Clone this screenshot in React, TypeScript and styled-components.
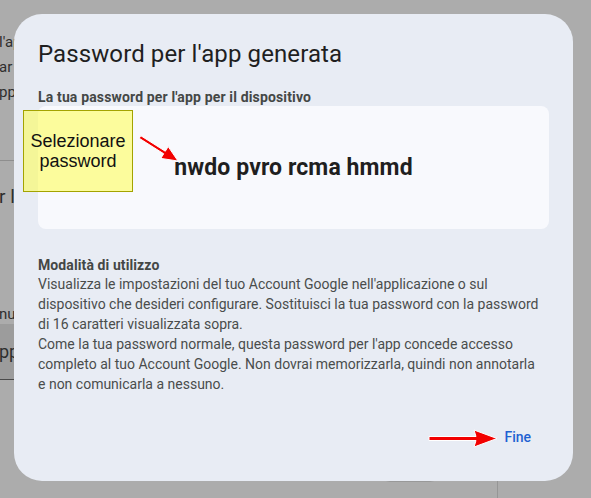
import React from "react";
import styled, { createGlobalStyle } from "styled-components";

const GlobalStyle = createGlobalStyle`
  html, body { margin: 0; padding: 0; }
  body {
    width: 591px;
    height: 498px;
    overflow: hidden;
    background: #acacac;
    font-family: Roboto, "Liberation Sans", sans-serif;
  }
`;

/* ---------- underlying page (behind the scrim) ---------- */
const Page = styled.div`
  width: 591px;
  height: 498px;
  display: flex;
  flex-direction: column;
  color: #2e2e2e;
  overflow: hidden;
`;

const PageTop = styled.div`
  flex: 1;
  display: flex;
  flex-direction: column;
  padding-top: 30px;
`;

const PageLine = styled.div<{ $size?: number; $lh?: number; $mt?: number }>`
  font-size: ${(p) => p.$size ?? 15}px;
  line-height: ${(p) => p.$lh ?? 25}px;
  margin-top: ${(p) => p.$mt ?? 0}px;
  white-space: nowrap;
  margin-left: -1px;
`;

const PageRule = styled.div<{ $mt: number }>`
  margin-top: ${(p) => p.$mt}px;
  height: 1px;
  background: #8e8e8e;
  width: 300px;
`;

const PageBand = styled.div`
  margin-top: 0;
  height: 55px;
  background: #9c9c9c;
  border-bottom: 1px solid #4a4a4a;
  width: 300px;
  display: flex;
  align-items: center;
  font-size: 18px;
  margin-left: -1px;
`;

const PageBottom = styled.div`
  height: 17px;
  display: flex;
  align-items: flex-start;
`;

const PillEdge = styled.div`
  margin-left: 380px;
  margin-top: -12px;
  width: 58px;
  height: 12px;
  border: 1px solid #999;
  border-top: none;
  border-radius: 0 0 10px 10px;
`;

const VRule = styled.div`
  margin-left: 57px;
  width: 1px;
  height: 17px;
  background: #969696;
`;

/* ---------- dialog ---------- */
const Dialog = styled.div`
  position: fixed;
  left: 14px;
  top: 14px;
  width: 559px;
  height: 467px;
  box-sizing: border-box;
  padding: 24px 24px 0 24px;
  background: #e8ecf4;
  border-radius: 28px;
  display: flex;
  flex-direction: column;
`;

const Title = styled.h1`
  margin: 0;
  font-size: 24px;
  line-height: 32px;
  font-weight: 400;
  color: #1f1f1f;
  letter-spacing: 0.1px;
`;

const Label = styled.div`
  margin-top: 19px;
  font-size: 14px;
  line-height: 16px;
  font-weight: 700;
  color: #444746;
  letter-spacing: 0.15px;
`;

const PasswordBox = styled.div`
  margin-top: 1px;
  height: 123px;
  background: #f8f9fd;
  border-radius: 8px;
  display: flex;
  align-items: center;
  justify-content: center;
`;

const PasswordText = styled.span`
  font-size: 23px;
  font-weight: 700;
  color: #1f1f1f;
  letter-spacing: 0.1px;
`;

const SectionHeading = styled.div`
  margin-top: 27px;
  font-size: 14px;
  line-height: 18px;
  font-weight: 700;
  color: #444746;
  letter-spacing: 0.1px;
`;

const Body = styled.p`
  margin: 0;
  font-size: 14px;
  line-height: 20px;
  color: #4a4d4c;
  white-space: nowrap;
`;

const Footer = styled.div`
  margin-top: 33px;
  display: flex;
  justify-content: flex-end;
  padding-right: 6px;
`;

const TextButton = styled.button`
  border: none;
  background: transparent;
  padding: 0 12px;
  height: 20px;
  font-family: Roboto, "Liberation Sans", sans-serif;
  font-size: 14px;
  font-weight: 500;
  color: #1f62d2;
  cursor: pointer;
`;

/* ---------- annotations (overlays) ---------- */
const Note = styled.div`
  position: absolute;
  left: 9px;
  top: 96px;
  width: 110px;
  height: 82px;
  box-sizing: border-box;
  border: 1px solid #a3a300;
  background: rgba(255, 255, 60, 0.5);
  display: flex;
  align-items: center;
  justify-content: center;
  text-align: center;
  font-family: "Liberation Sans", Arial, sans-serif;
  font-size: 18px;
  line-height: 20px;
  color: #111;
`;

const ArrowSvg = styled.svg<{ $l: number; $t: number }>`
  position: absolute;
  left: ${(p) => p.$l}px;
  top: ${(p) => p.$t}px;
  overflow: visible;
`;

export default function App() {
  return (
    <>
      <GlobalStyle />
      <Page>
        <PageTop>
          <PageLine>l'app</PageLine>
          <PageLine>ar</PageLine>
          <PageLine>pp,</PageLine>
          <PageRule $mt={55} />
          <PageLine $size={19} $lh={24} $mt={24}>
            r le
          </PageLine>
          <PageLine $size={15} $lh={20} $mt={95}>
            nuc
          </PageLine>
          <PageBand>pp</PageBand>
        </PageTop>
        <PageBottom>
          <PillEdge />
          <VRule />
        </PageBottom>
      </Page>

      <Dialog>
        <Title>Password per l'app generata</Title>
        <Label>La tua password per l'app per il dispositivo</Label>
        <PasswordBox>
          <PasswordText>nwdo pvro rcma hmmd</PasswordText>
        </PasswordBox>
        <SectionHeading>Modalità di utilizzo</SectionHeading>
        <Body>
          Visualizza le impostazioni del tuo Account Google nell'applicazione o sul
          <br />
          dispositivo che desideri configurare. Sostituisci la tua password con la password
          <br />
          di 16 caratteri visualizzata sopra.
        </Body>
        <Body>
          Come la tua password normale, questa password per l'app concede accesso
          <br />
          completo al tuo Account Google. Non dovrai memorizzarla, quindi non annotarla
          <br />e non comunicarla a nessuno.
        </Body>
        <Footer>
          <TextButton>Fine</TextButton>
        </Footer>

        <Note>
          Selezionare
          <br />
          password
        </Note>
        <ArrowSvg $l={122} $t={119} width={46} height={32} viewBox="0 0 46 32">
          <polygon
            points="4.8,2.73 29.3,18.23 32.2,13.6 42,28 24.8,25.4 27.7,20.77 3.2,5.27"
            fill="#f20000"
            stroke="#ffffff"
            strokeWidth={1}
            strokeLinejoin="round"
          />
        </ArrowSvg>
        <ArrowSvg $l={412} $t={414} width={74} height={21} viewBox="0 0 74 21">
          <polygon
            points="3,8.5 50,8.5 48,2 71,10.5 48,19 50,12.5 3,12.5"
            fill="#f20000"
            stroke="#ffffff"
            strokeWidth={1}
            strokeLinejoin="round"
          />
        </ArrowSvg>
      </Dialog>
    </>
  );
}
